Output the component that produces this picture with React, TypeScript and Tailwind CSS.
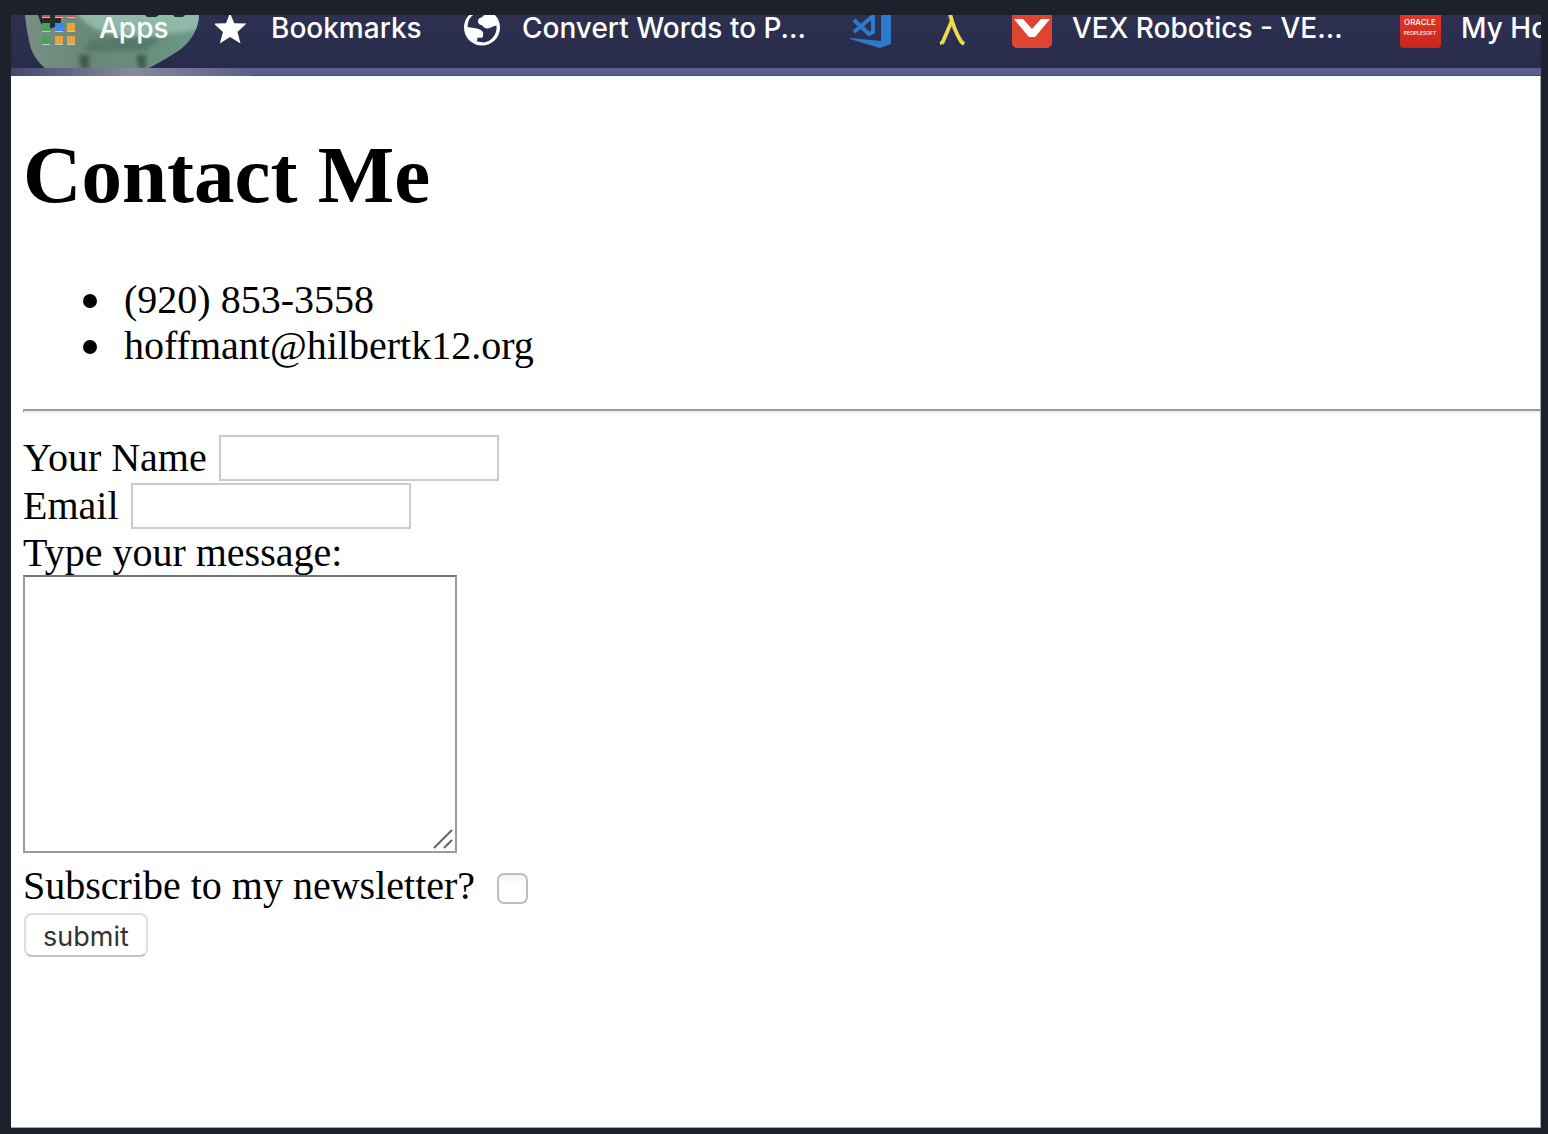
import type { ReactNode } from "react";

function AppsIcon() {
  const cells: [number, number, string][] = [
    [0, -6, "#e8453c"], [13, -6, "#e8453c"], [25, -6, "#e8453c"],
    [0, 8, "#4f9d5b"], [13, 8, "#4285f4"], [25, 8, "#e8a33a"],
    [0, 21, "#4f9d5b"], [13, 21, "#e8a33a"], [25, 21, "#e8a33a"],
  ];
  return (
    <svg width="34" height="53" viewBox="0 0 34 53" aria-hidden="true">
      {cells.map(([x, y, c]) => (
        <g key={`${x}-${y}`}>
          <rect x={x} y={y + 1} width="8" height="8" fill="#c3cbc6" />
          <rect x={x} y={y} width="8" height="8" fill={c} />
        </g>
      ))}
    </svg>
  );
}

function StarIcon() {
  return (
    <svg width="32" height="53" viewBox="0 0 32 53" aria-hidden="true">
      <path d="M15-2 19.2 8.2 31.500 8.500 22.500 17 25.500 28.500 15 22 4.800 28.500 8 17-1.500 8.500 11 8.200Z" fill="#fff" />
    </svg>
  );
}

function GlobeIcon() {
  return (
    <svg width="36" height="53" viewBox="0 0 36 53" aria-hidden="true">
      <circle cx="18" cy="12.500" r="18" fill="#fff" />
      <path
        d="M20-3C21 0 19 2 16 3 14 4 13.500 6 14.500 8.500 16 10 18.500 10 19.500 12 21 14 25 14 29 11.500L32.500 10.500C33.500 19 28 26 20 27.500L13 26.500 13.500 22.500Q16 23 18.500 22.500 19.500 20 19 17 17 14 13 13.500L3.500 12Q4 2 11-1Z"
        fill="#292e4e"
      />
    </svg>
  );
}

function CodeIcon() {
  return (
    <svg width="41" height="53" viewBox="0 0 41 53" aria-hidden="true">
      <path d="M31-4H41V29L30 33 0 24V23L31 26Z" fill="#2b7acb" />
      <path
        d="M23-2V17L19 19 4 5M23 1 4 17"
        fill="none"
        stroke="#2b7acb"
        strokeWidth="4"
      />
    </svg>
  );
}

function LambdaIcon() {
  return (
    <svg width="28" height="53" viewBox="0 0 28 53" fill="none" aria-hidden="true">
      <path d="M11-4C13 5 18 18 23 26l3 3M14 6 4 29" stroke="#a6a9b0" strokeWidth="4" />
      <path d="M10-3h2C14 6 18 18 23 27q1 1.500 3 1.500M13.500 6 5 26q-1 2-3 2.500" stroke="#f5df36" strokeWidth="3" />
    </svg>
  );
}

function VexIcon() {
  return (
    <svg width="40" height="53" viewBox="0 0 40 53" aria-hidden="true">
      <rect y="-8" width="40" height="41" rx="5" fill="#df4433" />
      <path d="M2 4h9l9 10 9-10h9L23 22h-6Z" fill="#fff" />
    </svg>
  );
}

function OracleIcon() {
  return (
    <svg width="41" height="53" viewBox="0 0 41 53" aria-hidden="true">
      <defs>
        <linearGradient id="oracle-red" x2="0" y2="1">
          <stop stopColor="#e63a2a" />
          <stop offset="1" stopColor="#c9261b" />
        </linearGradient>
      </defs>
      <rect y="-8" width="41" height="41" rx="4" fill="url(#oracle-red)" />
      <text x="20" y="10" fontSize="8" textAnchor="middle" fill="#fff" fontFamily="Inter, sans-serif">ORACLE</text>
      <text x="20" y="20" fontSize="5" textAnchor="middle" fill="#fff" fontFamily="Inter, sans-serif">PEOPLESOFT</text>
    </svg>
  );
}

function BarBackdrop() {
  return (
    <svg className="absolute left-0 top-0" width="240" height="61" viewBox="0 0 240 61" aria-hidden="true">
      <defs>
        <linearGradient id="hide" x2="1" y2="0">
          <stop stopColor="#7d9086" />
          <stop offset=".35" stopColor="#668879" />
          <stop offset="1" stopColor="#6f9f8d" />
        </linearGradient>
        <linearGradient id="edge" x2="1" y2="0">
          <stop stopColor="#42486b" />
          <stop offset=".5" stopColor="#858a9d" />
          <stop offset="1" stopColor="#5a5f8c" />
        </linearGradient>
        <filter id="soft" x="-20%" y="-20%" width="140%" height="140%">
          <feGaussianBlur stdDeviation="2" />
        </filter>
        <clipPath id="hide-shape">
          <path d="M14 0H188Q187 20 170 34 157 43 138 53H34Q21 43 18 26 15 12 14 0Z" />
        </clipPath>
      </defs>
      <g clipPath="url(#hide-shape)">
        <rect width="240" height="53" fill="url(#hide)" />
        <path d="M64-4H190V14Q150 22 115 20 80 20 64-4Z" fill="#90b8a9" filter="url(#soft)" />
        <path d="M68 40H78V54H70ZM125 40H135V54H128Z" fill="#40594f" filter="url(#soft)" />
        <path d="M80 25Q110 22 150 24L134 36H72Z" fill="#567868" filter="url(#soft)" />
        <path d="M27 0H50V10L38 14 30 9ZM134 0h14l-3 2h-9ZM162 0h12l-2 2h-8Z" fill="#202e2d" />
      </g>
      <rect y="53" width="240" height="8" fill="url(#edge)" />
    </svg>
  );
}

function Bookmark({ icon, label, className }: { icon: ReactNode; label?: string; className: string }) {
  return (
    <a href="#" aria-label={label ?? "Bookmark"} className={`flex shrink-0 items-start whitespace-nowrap ${className}`}>
      {icon}
      {label && <span className="leading-[26px]">{label}</span>}
    </a>
  );
}

function Bullet({ children }: { children: ReactNode }) {
  return (
    <li className="flex items-center gap-[27px]">
      <span className="mt-0.5 size-3.5 rounded-full bg-black" />
      {children}
    </li>
  );
}

export default function App() {
  return (
    <div className="flex min-h-screen flex-col bg-[#1d212c] pb-1.5 pl-[11px] pr-[7px] pt-[15px]">
      <nav className="relative flex h-[61px] overflow-x-clip bg-linear-to-b from-[#2d3050] to-[#272b49] font-['Inter',sans-serif] text-[28px] font-medium text-white">
        <div className="absolute inset-x-0 bottom-0 h-2 border-b border-[#484c70] bg-[#5a5f8c]" />
        <BarBackdrop />
        <div className="relative flex pl-[31px]">
          <Bookmark icon={<AppsIcon />} label="Apps" className="w-[173px] gap-[23px]" />
          <Bookmark icon={<StarIcon />} label="Bookmarks" className="w-[249px] gap-6" />
          <Bookmark icon={<GlobeIcon />} label="Convert Words to P..." className="w-[386px] gap-[22px]" />
          <Bookmark icon={<CodeIcon />} className="w-[88px]" />
          <Bookmark icon={<LambdaIcon />} className="w-[74px]" />
          <Bookmark icon={<VexIcon />} label="VEX Robotics - VE..." className="w-[388px] gap-5" />
          <Bookmark icon={<OracleIcon />} label="My Home" className="gap-5" />
        </div>
      </nav>

      <main className="flex-1 border-b border-r border-[#a5a7ad] bg-white pl-3 font-['Liberation_Serif',serif] text-[40px] leading-[46px] text-black">
        <h1 className="pt-[53px] text-[81px] font-bold leading-[92px]">Contact Me</h1>
        <ul className="mt-14 pl-[60px]">
          <Bullet>(920) 853-3558</Bullet>
          <Bullet>hoffmant@hilbertk12.org</Bullet>
        </ul>
        <hr className="mt-10 h-1 border-b-2 border-l border-t-2 border-b-[#eeeeee] border-l-[#9a9a9a] border-t-[#9a9a9a]" />
        <form className="mt-[22px]" onSubmit={(e) => e.preventDefault()}>
          <div className="flex h-12 items-start gap-3">
            <label htmlFor="name">Your Name</label>
            <input id="name" type="text" className="h-[46px] w-[280px] border-2 border-[#cbcbcb] bg-white px-1 text-[28px] outline-none" />
          </div>
          <div className="flex h-12 items-start gap-3">
            <label htmlFor="email">Email</label>
            <input id="email" type="email" className="h-[46px] w-[280px] border-2 border-[#cbcbcb] bg-white px-1 text-[28px] outline-none" />
          </div>
          <label htmlFor="message" className="block leading-[44px]">Type your message:</label>
          <div className="relative w-[434px]">
            <textarea id="message" className="block h-[278px] w-full resize-none border-2 border-[#9b9b9b] border-t-[#767676] bg-white p-1 text-[28px] outline-none" />
            <svg className="absolute bottom-1 right-1" width="20" height="20" viewBox="0 0 20 20" stroke="#666" strokeWidth="2" aria-hidden="true">
              <path d="M1 19 19 1M11 19l8-8" />
            </svg>
          </div>
          <div className="mt-2.5 flex items-center gap-[22px]">
            <label htmlFor="subscribe">Subscribe to my newsletter?</label>
            <input id="subscribe" type="checkbox" className="mt-1 size-[31px] appearance-none rounded-[7px] border-2 border-[#bdbdbd] bg-linear-to-b from-[#f3f3f3] to-white to-30% checked:bg-blue-500" />
          </div>
          <button type="submit" className="ml-px mt-1 block h-11 w-[124px] rounded-lg border-2 border-[#dedede] border-b-[#c4c4c4] bg-white pt-0.5 font-['Inter',sans-serif] text-[27px] leading-10 text-[#333]">
            submit
          </button>
        </form>
      </main>
    </div>
  );
}
